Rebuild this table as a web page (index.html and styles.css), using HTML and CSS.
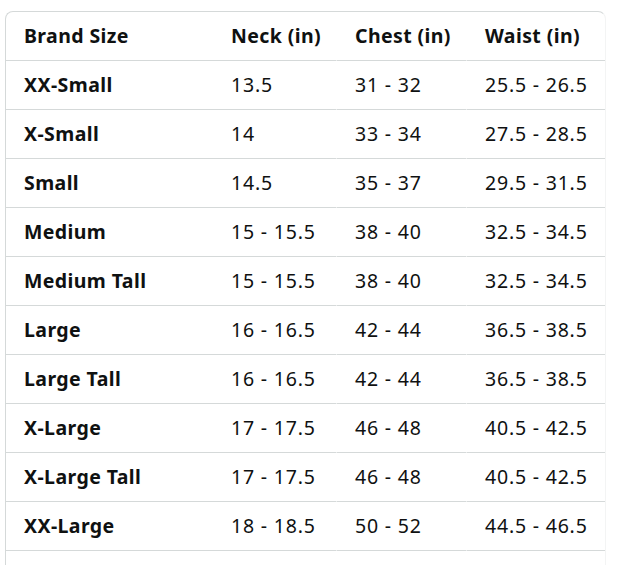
FILE: index.html
```html
<!DOCTYPE html>
<html lang="en">
<head>
<meta charset="utf-8">
<title>Size Chart</title>
<link rel="stylesheet" href="styles.css">
</head>
<body>
<div class="chart">
  <table class="size-table">
    <thead>
      <tr><th class="c1">Brand Size</th><th class="c2">Neck (in)</th><th class="c3">Chest (in)</th><th class="c4">Waist (in)</th></tr>
    </thead>
    <tbody>
      <tr><th class="c1">XX-Small</th><td class="c2">13.5</td><td class="c3">31 - 32</td><td class="c4">25.5 - 26.5</td></tr>
      <tr><th class="c1">X-Small</th><td class="c2">14</td><td class="c3">33 - 34</td><td class="c4">27.5 - 28.5</td></tr>
      <tr><th class="c1">Small</th><td class="c2">14.5</td><td class="c3">35 - 37</td><td class="c4">29.5 - 31.5</td></tr>
      <tr><th class="c1">Medium</th><td class="c2">15 - 15.5</td><td class="c3">38 - 40</td><td class="c4">32.5 - 34.5</td></tr>
      <tr><th class="c1">Medium Tall</th><td class="c2">15 - 15.5</td><td class="c3">38 - 40</td><td class="c4">32.5 - 34.5</td></tr>
      <tr><th class="c1">Large</th><td class="c2">16 - 16.5</td><td class="c3">42 - 44</td><td class="c4">36.5 - 38.5</td></tr>
      <tr><th class="c1">Large Tall</th><td class="c2">16 - 16.5</td><td class="c3">42 - 44</td><td class="c4">36.5 - 38.5</td></tr>
      <tr><th class="c1">X-Large</th><td class="c2">17 - 17.5</td><td class="c3">46 - 48</td><td class="c4">40.5 - 42.5</td></tr>
      <tr><th class="c1">X-Large Tall</th><td class="c2">17 - 17.5</td><td class="c3">46 - 48</td><td class="c4">40.5 - 42.5</td></tr>
      <tr><th class="c1">XX-Large</th><td class="c2">18 - 18.5</td><td class="c3">50 - 52</td><td class="c4">44.5 - 46.5</td></tr>
    </tbody>
  </table>
</div>
</body>
</html>
```
FILE: styles.css
```css
html, body {
  margin: 0;
  padding: 0;
  background: #ffffff;
}

body {
  font-family: "Noto Sans", "Open Sans", Arial, sans-serif;
  color: #0f1111;
}

.chart {
  margin: 11px 0 0 5px;
  width: 599px;
  padding-bottom: 40px;
  border: 1px solid #d5d9d9;
  border-right-color: #f3f4f4;
  border-bottom: none;
  border-radius: 8px 8px 0 0;
  overflow: hidden;
}

.size-table {
  border-collapse: separate;
  border-spacing: 0;
  width: 100%;
  table-layout: fixed;
}

.size-table th,
.size-table td {
  height: 48px;
  padding: 0 0 0 18px;
  text-align: left;
  vertical-align: middle;
  font-size: 19.5px;
  line-height: 24px;
  border-bottom: 1px solid #d5d9d9;
  white-space: nowrap;
}

.size-table th {
  font-weight: 700;
  letter-spacing: 0.4px;
}

.size-table td {
  font-weight: 400;
  letter-spacing: 0.8px;
}

.c1 { width: 189px; }
.c2 { width: 105px; }
.size-table .c3 {
  width: 111px;
  border-left: 1px solid #ffffff;
}
.size-table .c4 {
  border-left: 1px solid #ffffff;
}
```
